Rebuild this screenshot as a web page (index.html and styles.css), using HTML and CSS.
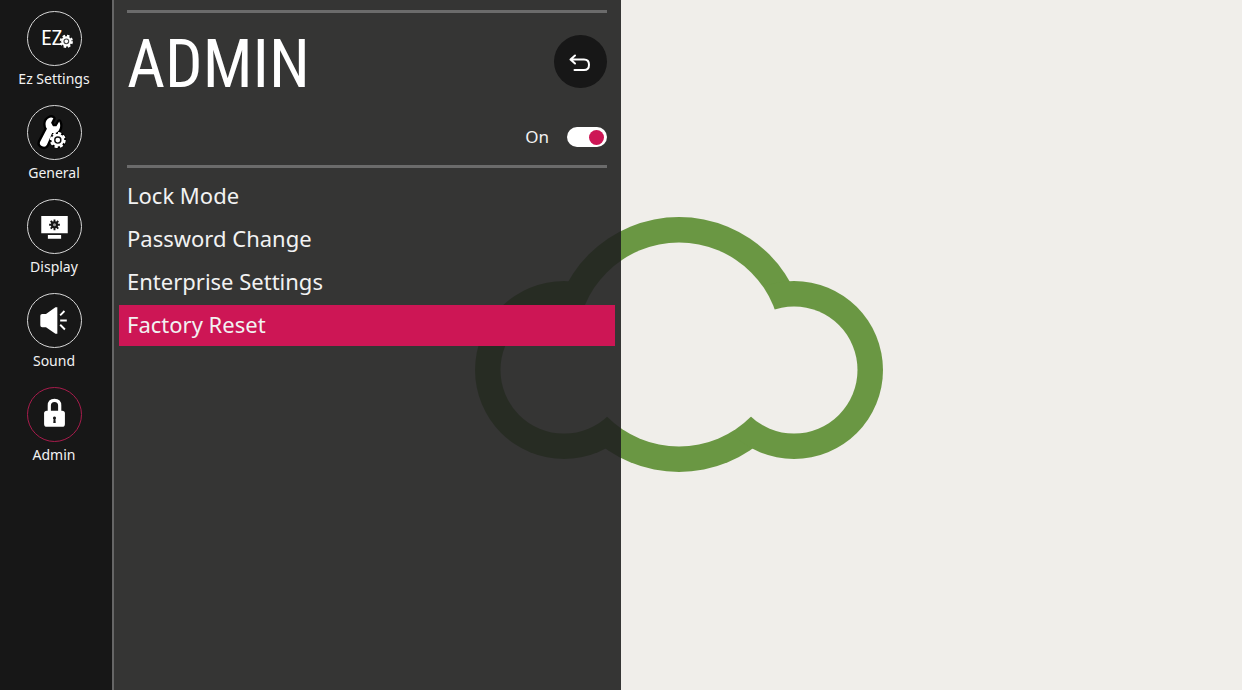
FILE: index.html
```html
<!DOCTYPE html>
<html lang="en">

<head>
  <meta charset="utf-8">
  <meta name="viewport" content="width=device-width, initial-scale=1">
  <title>Admin</title>
  <link rel="stylesheet" href="styles.css">
</head>

<body>

  <div class="stage">
    <svg class="cloud" viewBox="0 0 408 255" aria-hidden="true">
      <g fill="#6a9743">
        <circle cx="204" cy="127.500" r="127.500"/>
        <circle cx="89" cy="153" r="89"/>
        <circle cx="319" cy="153" r="89"/>
      </g>
      <g fill="#f0eeea">
        <circle cx="204" cy="127.500" r="102"/>
        <circle cx="89" cy="153" r="63.500"/>
        <circle cx="319" cy="153" r="63.500"/>
      </g>
    </svg>
  </div>

  <div class="menu">
    <nav class="sidebar">
      <a class="tab" href="#ez">
        <svg class="tab-icon" viewBox="0 0 56 56">
          <text class="ez-text" x="14" y="35">EZ</text>
          <circle cx="40.500" cy="31" r="5.400" fill="#fff"/>
          <circle cx="40.500" cy="31" r="6" fill="none" stroke="#fff" stroke-width="2" stroke-dasharray="2.700 2.012"/>
          <circle cx="40.500" cy="31" r="2.500" fill="#fff" stroke="#444" stroke-width="1.200"/>
        </svg>
        <span>Ez Settings</span>
      </a>
      <a class="tab" href="#general">
        <svg class="tab-icon" viewBox="0 0 56 56">
          <path d="M23 12.500q-4.500 2-4.500 6.500 0 3 1.500 5L12.700 38q-1 3 2.300 4.500t5-1.500l5.500-12.500q5 .500 7.200-3 2.500-4 .3-9l-3 5h-3.600l-2-3.800 2.400-4.700q-2-1.500-3.800-.500z" fill="#fff" stroke="#000" stroke-width="5" stroke-linejoin="round"/>
          <circle cx="31.500" cy="36" r="9" fill="#000"/>
          <path d="M23 12.500q-4.500 2-4.500 6.500 0 3 1.500 5L12.700 38q-1 3 2.300 4.500t5-1.500l5.500-12.500q5 .500 7.200-3 2.500-4 .3-9l-3 5h-3.600l-2-3.800 2.400-4.700q-2-1.500-3.800-.500z" fill="#fff"/>
          <circle cx="31.500" cy="36" r="6.800" fill="#fff"/>
          <circle cx="31.500" cy="36" r="7.300" fill="none" stroke="#fff" stroke-width="2.200" stroke-dasharray="3.400 2.333"/>
          <circle cx="31.500" cy="36" r="3.200" fill="#fff" stroke="#111" stroke-width="1.500"/>
        </svg>
        <span>General</span>
      </a>
      <a class="tab" href="#display">
        <svg class="tab-icon" viewBox="0 0 56 56">
          <path d="M14 17h28v18H14zM21 37h14v4H21z" fill="#fff"/>
          <path d="M28 20.500v11.400M22.300 26.200h11.400M24 22.200l8 8M32 22.200l-8 8" stroke="#171717" stroke-width="2"/>
          <circle cx="28" cy="26.200" r="3" fill="none" stroke="#171717" stroke-width="1.600"/>
          <circle cx="28" cy="26.200" r="1.600" fill="#999"/>
        </svg>
        <span>Display</span>
      </a>
      <a class="tab" href="#sound">
        <svg class="tab-icon" viewBox="0 0 56 56">
          <path d="M13 23q0-2 2-2h4l10-7h2v28h-2l-10-7h-4q-2 0-2-2z" fill="#fff"/>
          <path d="M34 22.500l4.500-4.500M34 28h7M34 32.500l5 5" fill="none" stroke="#fff" stroke-width="2"/>
        </svg>
        <span>Sound</span>
      </a>
      <a class="tab active" href="#admin">
        <svg class="tab-icon" viewBox="0 0 56 56">
          <path d="M22.500 26v-7.500q0-5.500 5.500-5.500t5.500 5.500v7.500" fill="none" stroke="#fff" stroke-width="3.400"/>
          <rect x="17" y="24" width="22" height="17" rx="3" fill="#fff"/>
          <path d="M28 30a1.700 1.700 0 0 1 1 3l.3 4h-2.600l.3-4a1.700 1.700 0 0 1 1-3z" fill="#171717"/>
        </svg>
        <span>Admin</span>
      </a>
    </nav>

    <main class="panel">
      <header class="panel-header">
        <div class="title-row">
          <h1>ADMIN</h1>
          <button class="back" type="button" aria-label="Back">
            <svg viewBox="0 0 53 53" aria-hidden="true">
              <path d="M21 20.500l-4.500 4 4.500 4M17 24.500h13q5 0 5 5.300t-5 5.300H20.500" fill="none" stroke="#fff" stroke-width="2" stroke-linecap="round" stroke-linejoin="round"/>
            </svg>
          </button>
        </div>
        <div class="switch-row">
          <label for="adminSwitch">On</label>
          <input class="switch" type="checkbox" id="adminSwitch" checked>
        </div>
      </header>

      <div class="options">
        <button class="option" type="button">Lock Mode</button>
        <button class="option" type="button">Password Change</button>
        <button class="option" type="button">Enterprise Settings</button>
        <button class="option selected" type="button">Factory Reset</button>
      </div>
    </main>
  </div>

</body>

</html>
```
FILE: styles.css
```css
* {
  box-sizing: border-box;
}

body {
  margin: 0;
  font-family: "Noto Sans", "Open Sans", sans-serif;
  color: #f2f2f2;
  background-color: #f0eeea;
}

/* Wallpaper behind the menu */
.stage {
  display: flex;
  align-items: center;
  justify-content: center;
  min-height: 100vh;
  padding: 0 0 2px 116px;
}

.cloud {
  width: 408px;
}

/* The menu lies over the left half of the wallpaper */
.menu {
  position: absolute;
  top: 0;
  left: 0;
  display: flex;
  width: 50%;
  min-height: 100vh;
}

.sidebar {
  display: flex;
  flex-direction: column;
  gap: 16px;
  flex: 0 0 112px;
  padding: 11px 4px 11px 0;
  background-color: #171717;
}

.tab {
  display: flex;
  flex-direction: column;
  align-items: center;
  gap: 3px;
  color: #f2f2f2;
  font-size: 14px;
  line-height: 20px;
  text-decoration: none;
}

.tab-icon {
  width: 55px;
  height: 55px;
  border: 1px solid #d8d8d8;
  border-radius: 50%;
}

.tab.active .tab-icon {
  border-color: #a81c4c;
}

.ez-text {
  font-family: "Roboto Condensed", "Liberation Sans Narrow", "Liberation Sans", sans-serif;
  font-size: 22px;
  fill: #fff;
}

.panel {
  flex: 1;
  padding: 10px 6px 0 5px;
  border-left: 2px solid #666;
  background-color: rgba(32, 32, 32, 0.9);
}

.panel-header {
  margin: 0 8px;
  border-top: 3px solid #6b6b6b;
  border-bottom: 3px solid #6b6b6b;
}

.title-row {
  display: flex;
  align-items: center;
  justify-content: space-between;
  height: 96px;
}

h1 {
  margin: 0;
  padding-top: 8px;
  font-family: "Roboto Condensed", "Liberation Sans Narrow", "Liberation Sans", sans-serif;
  font-size: 66px;
  font-weight: 400;
  line-height: 80px;
  color: #fff;
}

.back {
  width: 53px;
  height: 53px;
  padding: 0;
  border: none;
  border-radius: 50%;
  background-color: #171717;
  cursor: pointer;
}

.back svg {
  display: block;
}

.switch-row {
  display: flex;
  align-items: center;
  justify-content: flex-end;
  gap: 18px;
  padding: 16px 0;
  font-size: 17px;
  line-height: 24px;
}

.switch {
  appearance: none;
  display: flex;
  align-items: center;
  width: 40px;
  height: 20px;
  margin: 0;
  padding: 0 3px;
  border-radius: 10px;
  background-color: #fff;
  cursor: pointer;
}

.switch::before {
  content: "";
  width: 15px;
  height: 15px;
  border-radius: 50%;
  background-color: #999;
}

.switch:checked {
  justify-content: flex-end;
}

.switch:checked::before {
  background-color: #cd1655;
}

.options {
  display: flex;
  flex-direction: column;
  gap: 2px;
  padding-top: 8px;
}

.option {
  height: 41px;
  padding: 0 8px 4px;
  border: none;
  background: none;
  color: #f2f2f2;
  font-family: inherit;
  font-size: 22px;
  text-align: left;
  cursor: pointer;
}

.option.selected {
  background-color: #cd1655;
}
```
